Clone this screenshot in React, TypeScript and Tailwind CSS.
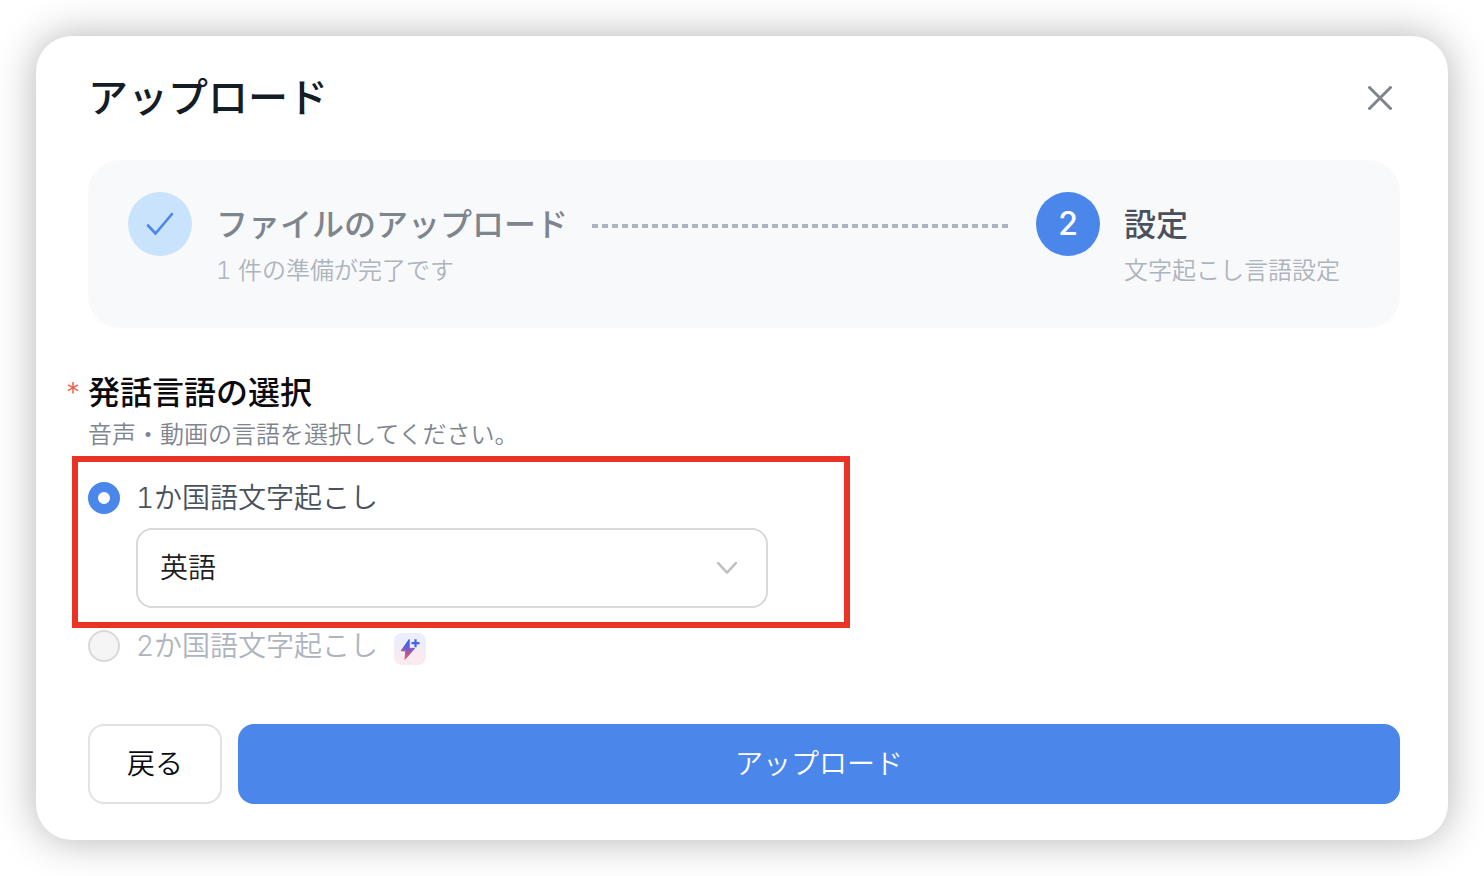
import React, { useState } from 'react';

type LanguageMode = 'single' | 'double';

const languages = [
  { value: 'en', label: '英語' },
  { value: 'ja', label: '日本語' },
  { value: 'zh', label: '中国語' },
];

const CheckIcon = () => (
  <svg width="28" height="24" viewBox="0 0 28 24" fill="none" className="text-[#4b86ea]">
    <path d="M2 13.5 9.5 21.5 26 2" stroke="currentColor" strokeWidth="2.6" strokeLinecap="round" />
  </svg>
);

const CloseIcon = () => (
  <svg width="24" height="24" viewBox="0 0 24 24" fill="none">
    <path d="M1.5 1.5 22.5 22.5M22.5 1.5 1.5 22.5" stroke="currentColor" strokeWidth="3" strokeLinecap="round" />
  </svg>
);

const BoostIcon = () => (
  <svg width="20" height="22" viewBox="0 0 20 22">
    <defs>
      <linearGradient id="boost" x1="0" y1="0" x2="0" y2="22" gradientUnits="userSpaceOnUse">
        <stop offset="0.25" stopColor="#3b62f6" />
        <stop offset="1" stopColor="#ff4f58" />
      </linearGradient>
    </defs>
    <path d="M9.2 1.4 1.2 12.8H5.8L5 21.2 14.6 10.4H9.2Z" fill="url(#boost)" stroke="url(#boost)" strokeLinejoin="round" />
    <path d="M15.5 1.2V9.2M11.5 5.2H19.5" stroke="#4263f0" strokeWidth="2.2" />
  </svg>
);

interface ModeRadioProps {
  id: string;
  label: string;
  checked: boolean;
  disabled?: boolean;
  onChange: () => void;
  children?: React.ReactNode;
}

const ModeRadio: React.FC<ModeRadioProps> = ({ id, label, checked, disabled, onChange, children }) => (
  <div className="flex items-center gap-4">
    <input
      id={id}
      type="radio"
      name="mode"
      checked={checked}
      disabled={disabled}
      onChange={onChange}
      className="w-8 h-8 shrink-0 appearance-none rounded-full border-2 border-[#d9d9d9] bg-white checked:border-[10px] checked:border-[#4b86ea] disabled:bg-[#f5f5f5]"
    />
    <label htmlFor={id} className={`text-[28px] leading-[44px] ${disabled ? 'text-[#adb4bd]' : 'text-[#49515c]'}`}>
      {label}
    </label>
    {children}
  </div>
);

export default function App() {
  const [mode, setMode] = useState<LanguageMode>('single');
  const [language, setLanguage] = useState('en');

  return (
    <div className="min-h-screen bg-white p-9 font-['Inter','Noto_Sans_CJK_JP',sans-serif] font-[350] tabular-nums">
      <div className="rounded-[36px] bg-white pl-[52px] pr-12 pb-9 shadow-[0_0_40px_rgba(0,0,0,0.3)]">
        <div className="flex items-center justify-between py-8 pr-2">
          <h1 className="text-[40px] leading-[60px] font-medium text-[#141c26]">アップロード</h1>
          <button type="button" aria-label="閉じる" className="text-[#7e858f]">
            <CloseIcon />
          </button>
        </div>

        {/* Steps */}
        <div className="flex gap-6 rounded-[32px] bg-[#f8f9fb] pt-8 pb-11 pl-10 pr-[60px]">
          <div className="flex gap-6">
            <div className="flex w-16 h-16 items-center justify-center rounded-full bg-[#cae3fd]">
              <CheckIcon />
            </div>
            <div>
              <p className="text-[32px] leading-[66px] font-medium text-[#7e858d]">ファイルのアップロード</p>
              <p className="text-2xl leading-[26px] text-[#adb4bd]">1 件の準備が完了です</p>
            </div>
          </div>
          <div className="mt-8 h-1 flex-1 bg-[repeating-linear-gradient(90deg,#adb4bd_0_6px,transparent_6px_10px)]" />
          <div className="flex gap-6">
            <div className="flex w-16 h-16 items-center justify-center rounded-full bg-[#4b86ea] text-[32px] leading-[66px] font-medium text-white">
              2
            </div>
            <div>
              <p className="text-[32px] leading-[66px] font-medium text-[#49515c]">設定</p>
              <p className="text-2xl leading-[26px] text-[#adb4bd]">文字起こし言語設定</p>
            </div>
          </div>
        </div>

        {/* Language selection */}
        <div className="mt-10">
          <h2 className="-ml-6 flex text-[32px] leading-[50px] font-medium text-[#0b0b0f]">
            <span className="w-6 text-[28px] font-light text-[#ea5f56]">*</span>
            発話言語の選択
          </h2>
          <p className="text-2xl leading-[34px] text-[#7e858f]">音声・動画の言語を選択してください。</p>

          <div className="relative mt-6">
            <div className="pointer-events-none absolute -inset-y-5 -left-4 w-[778px] border-[6px] border-[#ea3324]" />
            <ModeRadio
              id="mode-single"
              label="1か国語文字起こし"
              checked={mode === 'single'}
              onChange={() => setMode('single')}
            />
            <div className="relative mt-2 ml-12 max-w-[632px]">
              <select
                aria-label="言語"
                value={language}
                onChange={(e) => setLanguage(e.target.value)}
                className="block h-20 w-full appearance-none rounded-2xl border-2 border-[#d9d9d9] bg-white px-[22px] text-[28px] text-[#1f1f1f]"
              >
                {languages.map((l) => (
                  <option key={l.value} value={l.value}>
                    {l.label}
                  </option>
                ))}
              </select>
              <svg
                width="20"
                height="12"
                viewBox="0 0 20 12"
                fill="none"
                className="pointer-events-none absolute top-[34px] right-[31px] text-[#bfc1c5]"
              >
                <path d="M1.2 1.2 10 10.6 18.8 1.2" stroke="currentColor" strokeWidth="2.6" strokeLinecap="round" strokeLinejoin="round" />
              </svg>
            </div>
          </div>

          <div className="mt-4">
            <ModeRadio
              id="mode-double"
              label="2か国語文字起こし"
              checked={mode === 'double'}
              disabled
              onChange={() => setMode('double')}
            >
              <span className="mt-1.5 flex w-8 h-8 items-center justify-center rounded-lg bg-linear-to-b from-[#e8eefe] to-[#feeaed]">
                <BoostIcon />
              </span>
            </ModeRadio>
          </div>
        </div>

        <div className="mt-14 flex gap-4">
          <button type="button" className="h-20 w-[134px] rounded-2xl border-2 border-[#e1e2e8] bg-white text-[28px] text-[#0b0b0f]">
            戻る
          </button>
          <button type="button" className="h-20 flex-1 rounded-2xl bg-[#4b86ea] text-[28px] text-white">
            アップロード
          </button>
        </div>
      </div>
    </div>
  );
}
